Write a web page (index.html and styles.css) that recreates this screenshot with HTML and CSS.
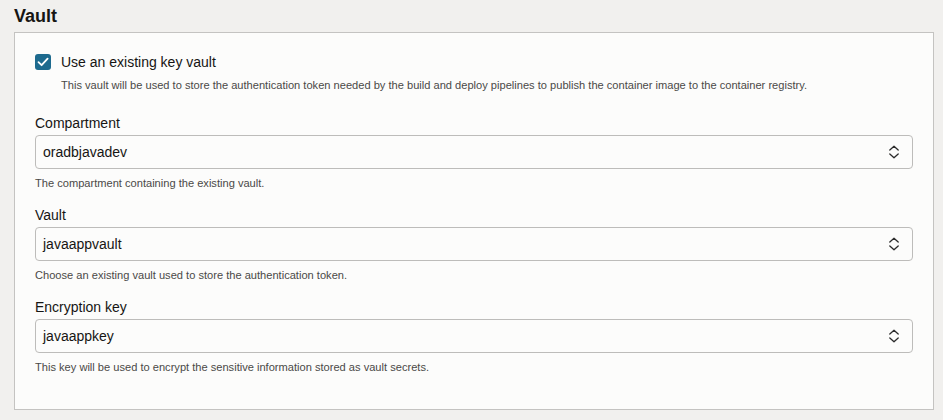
FILE: index.html
```html
<!DOCTYPE html>
<html>
<head>
<meta charset="utf-8">
<link rel="stylesheet" href="styles.css">
</head>
<body>
<h2 class="title">Vault</h2>
<section class="panel">
  <div class="check-row">
    <span class="checkbox">
      <svg width="12" height="10" viewBox="0 0 12 10"><path d="M1.5 5.2 L4.6 8.2 L10.6 1.6" fill="none" stroke="#fff" stroke-width="1.8" stroke-linecap="round" stroke-linejoin="round"/></svg>
    </span>
    <span class="check-label">Use an existing key vault</span>
  </div>
  <p class="check-help">This vault will be used to store the authentication token needed by the build and deploy pipelines to publish the container image to the container registry.</p>

  <div class="field">
    <label class="field-label">Compartment</label>
    <div class="select">
      <span class="select-value">oradbjavadev</span>
      <svg class="chev" width="12" height="14" viewBox="0 0 12 14"><path d="M1.8 5 L6 1.2 L10.2 5 M1.8 9 L6 12.8 L10.2 9" fill="none" stroke="#2b2b2b" stroke-width="1.3" stroke-linecap="round" stroke-linejoin="round"/></svg>
    </div>
    <p class="help">The compartment containing the existing vault.</p>
  </div>

  <div class="field">
    <label class="field-label">Vault</label>
    <div class="select">
      <span class="select-value">javaappvault</span>
      <svg class="chev" width="12" height="14" viewBox="0 0 12 14"><path d="M1.8 5 L6 1.2 L10.2 5 M1.8 9 L6 12.8 L10.2 9" fill="none" stroke="#2b2b2b" stroke-width="1.3" stroke-linecap="round" stroke-linejoin="round"/></svg>
    </div>
    <p class="help">Choose an existing vault used to store the authentication token.</p>
  </div>

  <div class="field">
    <label class="field-label">Encryption key</label>
    <div class="select">
      <span class="select-value">javaappkey</span>
      <svg class="chev" width="12" height="14" viewBox="0 0 12 14"><path d="M1.8 5 L6 1.2 L10.2 5 M1.8 9 L6 12.8 L10.2 9" fill="none" stroke="#2b2b2b" stroke-width="1.3" stroke-linecap="round" stroke-linejoin="round"/></svg>
    </div>
    <p class="help">This key will be used to encrypt the sensitive information stored as vault secrets.</p>
  </div>
</section>
</body>
</html>
```
FILE: styles.css
```css
* { box-sizing: border-box; }
body {
  margin: 0;
  background: #f1f0ee;
  font-family: "Liberation Sans", Arial, sans-serif;
  color: #161513;
}
.title {
  margin: 0;
  padding: 5px 0 0 14px;
  height: 32px;
  font-size: 18px;
  line-height: 22px;
  font-weight: bold;
  color: #161513;
}
.panel {
  margin: 0 9px 0 14px;
  background: #fcfcfb;
  border: 1px solid #c4c3c1;
  padding: 21px 20px 35px 20px;
}
.check-row {
  display: flex;
  align-items: center;
  height: 16px;
}
.checkbox {
  width: 16px;
  height: 16px;
  border-radius: 3px;
  background: #1d6a8e;
  display: flex;
  align-items: center;
  justify-content: center;
  flex-shrink: 0;
}
.check-label {
  margin-left: 10px;
  font-size: 14px;
  line-height: 16px;
}
.check-help {
  margin: 9px 0 0 26px;
  font-size: 11.1px;
  line-height: 13px;
  color: #4a4947;
}
.field { margin-top: 16px; }
.check-help + .field { margin-top: 22px; }
.field-label {
  display: block;
  font-size: 14px;
  line-height: 18px;
}
.select {
  margin-top: 3px;
  height: 34px;
  border: 1px solid #bdbcba;
  border-radius: 4px;
  background: #fcfcfb;
  display: flex;
  align-items: center;
  justify-content: space-between;
  padding: 0 12px 0 7px;
}
.select-value {
  font-size: 14px;
  line-height: 18px;
}
.chev { display: block; }
.help {
  margin: 8px 0 0 0;
  font-size: 11.1px;
  line-height: 13px;
  color: #4a4947;
}
```
